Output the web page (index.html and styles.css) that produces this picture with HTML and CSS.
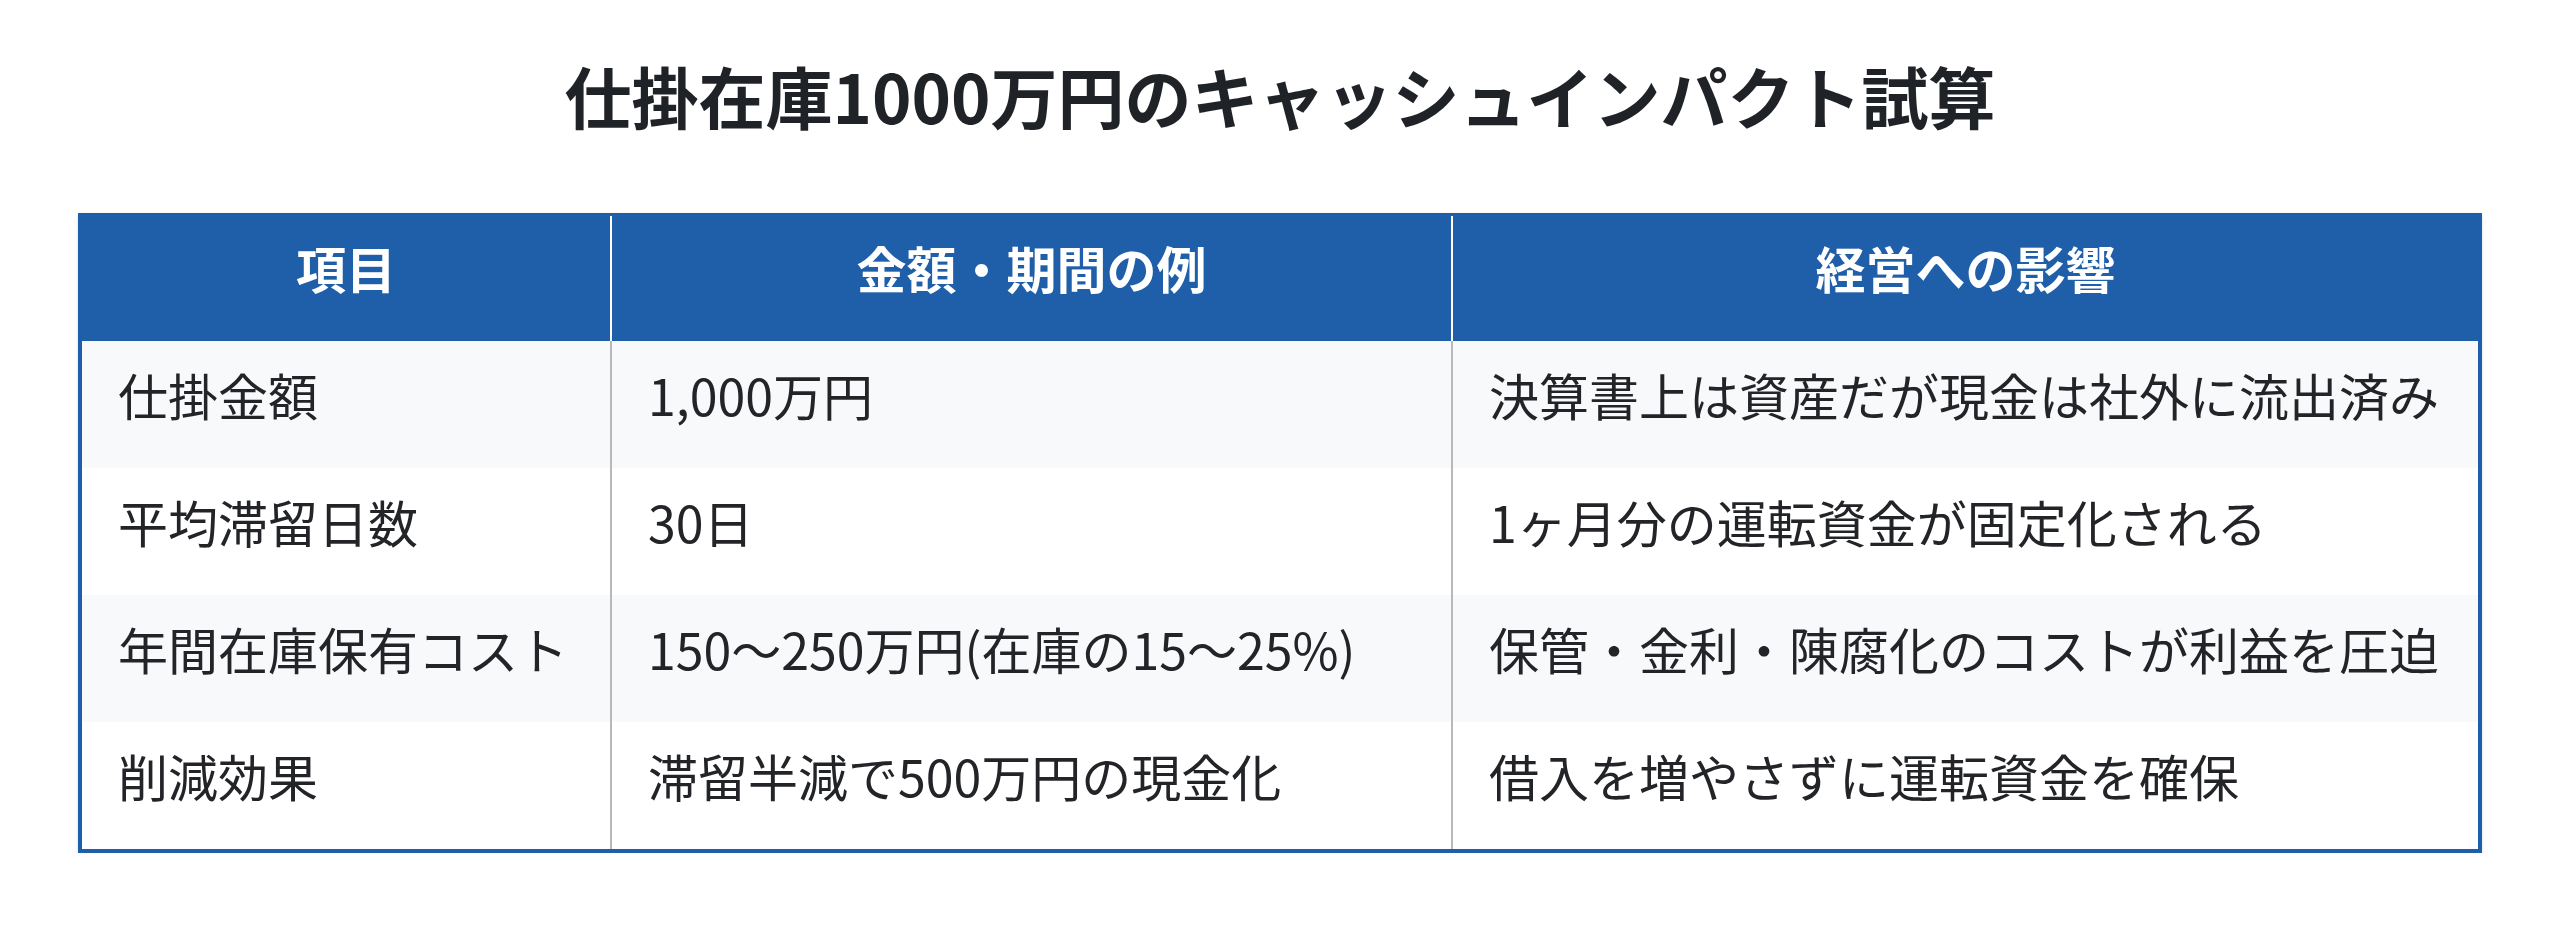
FILE: index.html
```html
<!DOCTYPE html>
<html lang="ja">
<head>
<meta charset="utf-8">
<title>仕掛在庫1000万円のキャッシュインパクト試算</title>
<link rel="stylesheet" href="styles.css">
</head>
<body>
<main class="page">
  <h1 class="title">仕掛在庫1000万円のキャッシュインパクト試算</h1>
  <table class="impact">
    <colgroup>
      <col class="c1">
      <col class="c2">
      <col class="c3">
    </colgroup>
    <thead>
      <tr>
        <th>項目</th>
        <th>金額・期間の例</th>
        <th>経営への影響</th>
      </tr>
    </thead>
    <tbody>
      <tr>
        <td>仕掛金額</td>
        <td>1,000万円</td>
        <td>決算書上は資産だが現金は社外に流出済み</td>
      </tr>
      <tr>
        <td>平均滞留日数</td>
        <td>30日</td>
        <td>1ヶ月分の運転資金が固定化される</td>
      </tr>
      <tr>
        <td>年間在庫保有コスト</td>
        <td>150〜250万円(在庫の15〜25%)</td>
        <td>保管・金利・陳腐化のコストが利益を圧迫</td>
      </tr>
      <tr>
        <td>削減効果</td>
        <td>滞留半減で500万円の現金化</td>
        <td>借入を増やさずに運転資金を確保</td>
      </tr>
    </tbody>
  </table>
</main>
</body>
</html>
```

FILE: styles.css
```css
html, body {
  margin: 0;
  padding: 0;
  background: #ffffff;
}

body {
  font-family: "Noto Sans CJK JP", "Noto Sans", sans-serif;
  color: #222428;
}

.page {
  padding: 45px 78px 0;
}

.title {
  margin: 0 0 69px;
  font-size: 67px;
  line-height: 99px;
  font-weight: 700;
  text-align: center;
  color: #1f2226;
}

.impact {
  width: 100%;
  table-layout: fixed;
  border-collapse: collapse;
  border: 4px solid #1f5ea8;
  border-top-width: 3px;
  box-shadow: 0 1px 3px rgba(0, 0, 0, 0.14);
}

.c1 { width: 531px; }
.c2 { width: 841px; }
.c3 { width: auto; }

.impact th {
  background: #1f5ea8;
  color: #ffffff;
  font-size: 50px;
  font-weight: 700;
  line-height: 75px;
  padding: 14px 36px 36px;
  text-align: center;
  border-left: 2px solid #ffffff;
  border-right: 2px solid #ffffff;
}

.impact td {
  font-size: 50px;
  font-weight: 400;
  line-height: 75px;
  padding: 16px 36px 36px;
  text-align: left;
  white-space: nowrap;
  color: #222428;
  border-left: 2px solid #b8b8b8;
  border-right: 2px solid #b8b8b8;
}

.impact tbody tr:nth-child(odd) td {
  background: #f8f9fb;
}

.impact tbody tr:nth-child(even) td {
  background: #ffffff;
}
```
